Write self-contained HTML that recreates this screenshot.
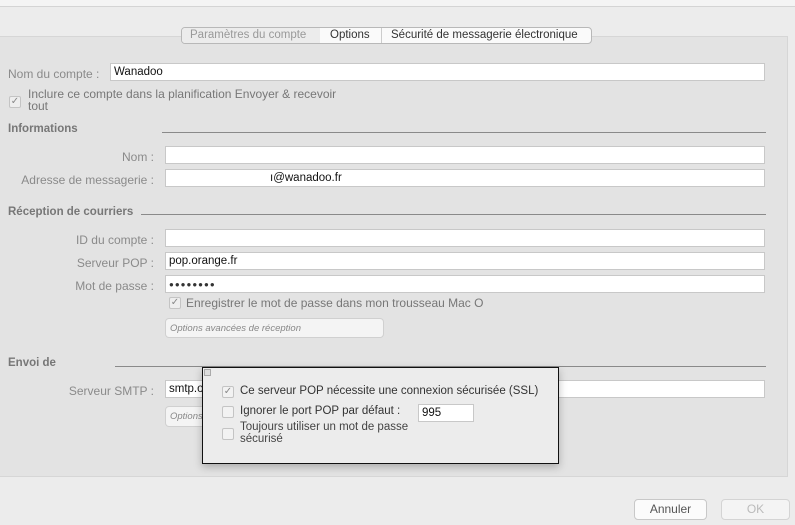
<!DOCTYPE html>
<html><head><meta charset="utf-8"><style>
*{margin:0;padding:0;box-sizing:border-box}
body{width:795px;height:525px;overflow:hidden;background:#ececec;font-family:"Liberation Sans",sans-serif;position:relative;color:#7a7a7a}
.a{position:absolute;white-space:nowrap}
.top{left:0;top:0;width:795px;height:7px;background:#f4f4f4;border-bottom:1px solid #d4d4d4}
.panel{left:0;top:36px;width:788px;height:441px;background:#e3e3e3;border:1px solid #d6d6d6;border-left:none}
.lbl{font-size:12px;color:#8a8a8a;text-align:right}
.r{right:641px}
.in{background:#fff;border:1px solid #c8c8c8;height:18px;font-size:11.5px;color:#111;padding:2px 3px}
.h{font-size:11.5px;font-weight:bold;color:#777}
.line{height:1px;background:#8a8a8a}
.cb{width:12px;height:12px;border:1px solid #c4c4c4;background:#eee;border-radius:2px;font-size:10px;line-height:10px;text-align:center;color:#888}
.btn{background:#f4f4f4;border:1px solid #d0d0d0;border-radius:4px;font-size:9.5px;font-style:italic;color:#888;padding:4px 4px}
</style></head><body>
<div class="a top"></div>
<div class="a panel"></div>
<div class="a" style="left:181px;top:27px;width:411px;height:17px;background:#fafafa;border:1px solid #b8b8b8;border-radius:4px"></div>
<div class="a" style="left:182px;top:28px;width:138px;height:15px;background:#ececec;border-radius:3px 0 0 3px"></div>
<div class="a" style="left:190px;top:29px;font-size:11.5px;color:#999">Paramètres du compte</div>
<div class="a" style="left:330px;top:29px;font-size:11.5px;color:#333">Options</div>
<div class="a" style="left:381px;top:28px;width:1px;height:15px;background:#ccc"></div>
<div class="a" style="left:391px;top:29px;font-size:11.5px;color:#333">Sécurité de messagerie électronique</div>

<div class="a lbl" style="left:8px;top:67px">Nom du compte :</div>
<div class="a in" style="left:110px;top:63px;width:655px">Wanadoo</div>
<div class="a cb" style="left:9px;top:96px">✓</div>
<div class="a" style="left:28px;top:88px;font-size:12px;color:#777;line-height:12px;height:22px;overflow:hidden">Inclure ce compte dans la planification Envoyer &amp; recevoir<br>tout</div>

<div class="a h" style="left:8px;top:123px">Informations</div>
<div class="a line" style="left:162px;top:132px;width:604px"></div>
<div class="a lbl r" style="top:150px">Nom :</div>
<div class="a in" style="left:165px;top:146px;width:600px"></div>
<div class="a lbl r" style="top:173px">Adresse de messagerie :</div>
<div class="a in" style="left:165px;top:169px;width:600px;padding-left:104px">ı@wanadoo.fr</div>

<div class="a h" style="left:8px;top:206px">Réception de courriers</div>
<div class="a line" style="left:141px;top:214px;width:625px"></div>
<div class="a lbl r" style="top:233px">ID du compte :</div>
<div class="a in" style="left:165px;top:229px;width:600px"></div>
<div class="a lbl r" style="top:256px">Serveur POP :</div>
<div class="a in" style="left:165px;top:252px;width:600px">pop.orange.fr</div>
<div class="a lbl r" style="top:279px">Mot de passe :</div>
<div class="a in" style="left:165px;top:275px;width:600px;font-size:8px;letter-spacing:1px;color:#333;padding-top:4px">●●●●●●●●</div>
<div class="a cb" style="left:169px;top:297px">✓</div>
<div class="a" style="left:186px;top:296px;font-size:12px;color:#777;width:298px;overflow:hidden">Enregistrer le mot de passe dans mon trousseau Mac OS</div>
<div class="a btn" style="left:165px;top:318px;width:219px;height:20px">Options avancées de réception</div>

<div class="a h" style="left:8px;top:357px">Envoi de</div>
<div class="a line" style="left:115px;top:366px;width:651px"></div>
<div class="a lbl r" style="top:384px">Serveur SMTP :</div>
<div class="a in" style="left:165px;top:380px;width:600px">smtp.o</div>
<div class="a btn" style="left:165px;top:406px;width:60px;height:21px">Options</div>

<div class="a" style="left:202px;top:367px;width:357px;height:97px;background:#ececec;border:1px solid #111;box-shadow:0 3px 8px rgba(0,0,0,.25)"></div>
<div class="a" style="left:204px;top:369px;width:7px;height:7px;border:1px solid #aaa;background:#ddd"></div>
<div class="a cb" style="left:222px;top:386px;background:#f2f2f2">✓</div>
<div class="a" style="left:240px;top:385px;font-size:11.5px;color:#333">Ce serveur POP nécessite une connexion sécurisée (SSL)</div>
<div class="a cb" style="left:222px;top:406px;background:#f2f2f2"></div>
<div class="a" style="left:240px;top:405px;font-size:11.5px;color:#333">Ignorer le port POP par défaut :</div>
<div class="a in" style="left:418px;top:404px;width:56px">995</div>
<div class="a cb" style="left:222px;top:428px;background:#f2f2f2"></div>
<div class="a" style="left:240px;top:421px;font-size:11.5px;color:#444;line-height:12px;height:21px;overflow:hidden">Toujours utiliser un mot de passe<br>sécurisé</div>

<div class="a" style="left:634px;top:499px;width:73px;height:21px;background:#fbfbfb;border:1px solid #c8c8c8;border-radius:4px;font-size:12px;color:#555;text-align:center;line-height:19px">Annuler</div>
<div class="a" style="left:721px;top:499px;width:69px;height:21px;background:#f4f4f4;border:1px solid #d4d4d4;border-radius:4px;font-size:12px;color:#bbb;text-align:center;line-height:19px">OK</div>
</body></html>
